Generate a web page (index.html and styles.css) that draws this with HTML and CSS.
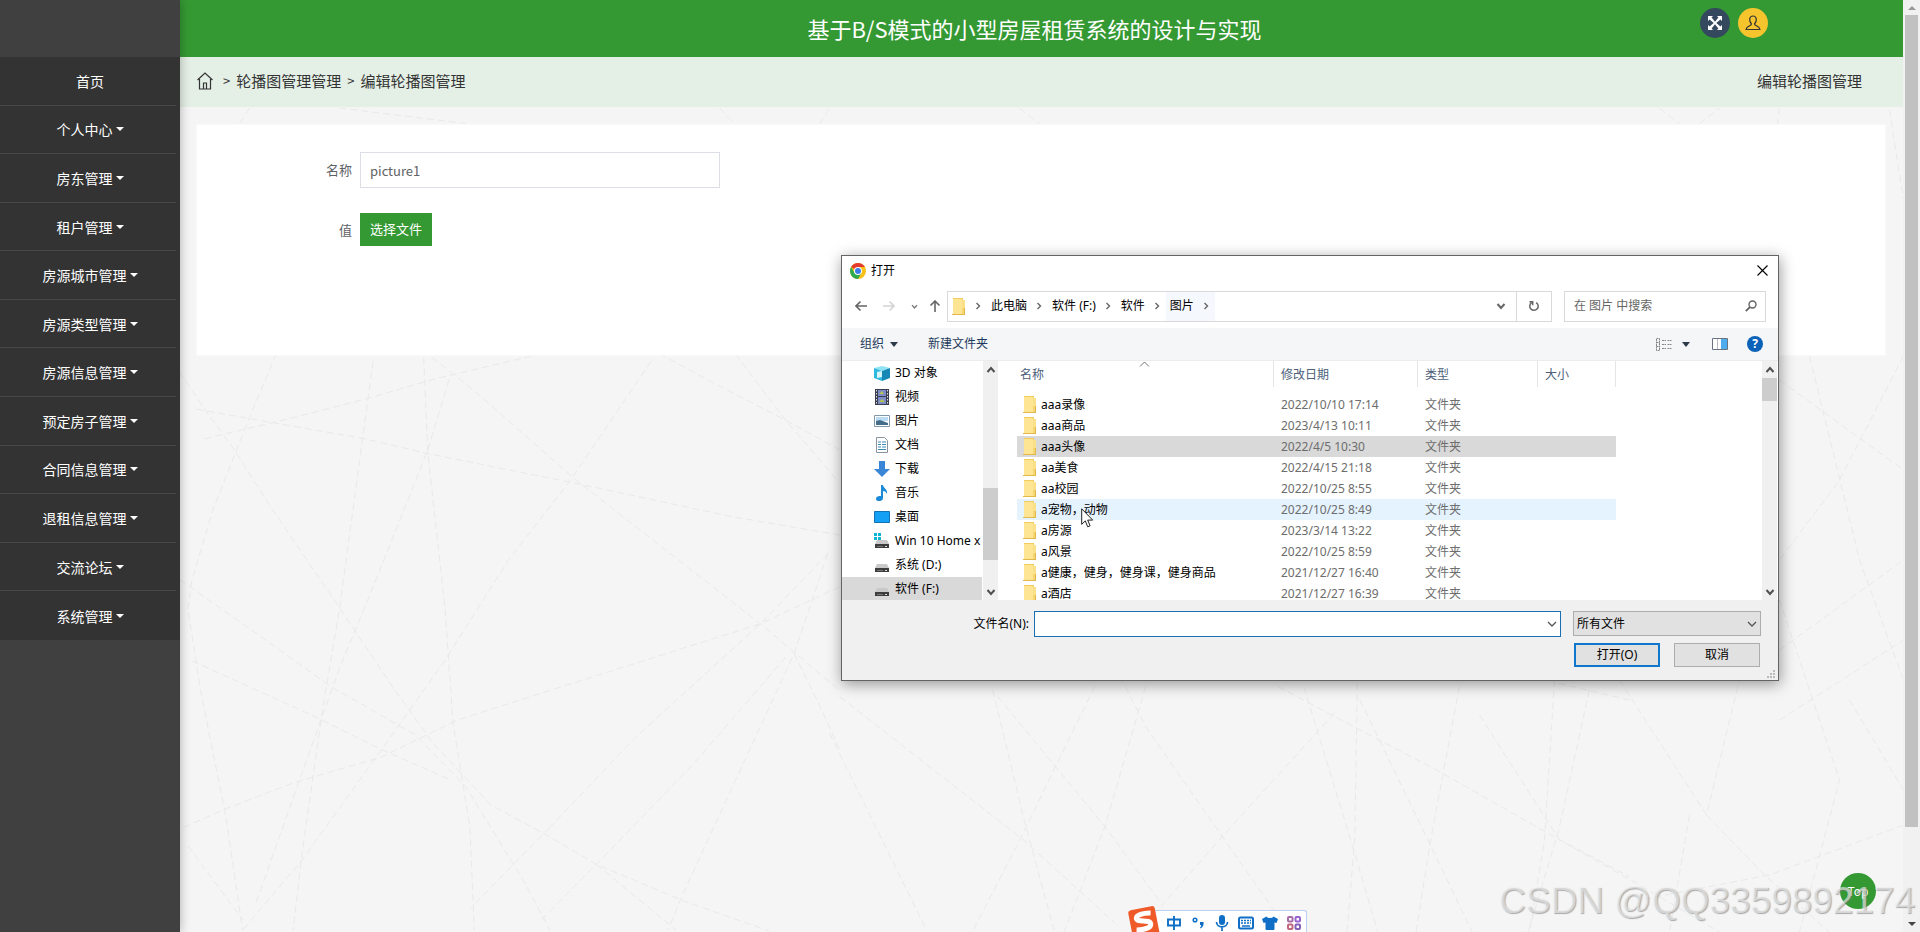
FILE: index.html
```html
<!DOCTYPE html>
<html lang="zh-CN">
<head>
<meta charset="utf-8">
<meta name="viewport" content="width=device-width, initial-scale=1">
<title>基于B/S模式的小型房屋租赁系统的设计与实现</title>
<link rel="stylesheet" href="styles.css">
</head>
<body>
<svg class="defs" aria-hidden="true">
  <symbol id="folder" viewBox="0 0 14 17"><path fill="#f0cd5e" d="M1 0h10v17H1z"/><path fill="#fde593" d="M1 1h9v15H1z"/><path fill="#f5d670" d="M10 9h2.500v8H10z"/><path fill="#fbe08a" d="M10 2h3v8h-3z"/><path fill="#e3b84a" d="M0 16h13v1H0zM12 10h1v6h-1z"/></symbol>
  <symbol id="chev-r" viewBox="0 0 8 8"><path d="M2.500 1l3 3-3 3" fill="none" stroke="#666" stroke-width="1.400"/></symbol>
  <symbol id="chev-d" viewBox="0 0 10 10"><path d="M1 3l4 4 4-4" fill="none" stroke="currentColor" stroke-width="1.300"/></symbol>
  <symbol id="chev-b" viewBox="0 0 10 10"><path d="M1.500 3l3.500 4 3.500-4" fill="none" stroke="currentColor" stroke-width="2"/></symbol>
  <symbol id="drive" viewBox="0 0 16 16"><path fill="#c9c9c9" d="M3 7h10l2 4H1z"/><path fill="#3d3d3d" d="M1 11h14v4H1z"/><path fill="#777" d="M3 13h6v1H3z"/><path fill="#ddd" d="M11 13h2v1h-2z"/></symbol>
</svg>

<nav class="sidebar">
  <div class="menu">
    <a href="#">首页</a>
    <a href="#" class="drop">个人中心</a>
    <a href="#" class="drop">房东管理</a>
    <a href="#" class="drop">租户管理</a>
    <a href="#" class="drop">房源城市管理</a>
    <a href="#" class="drop">房源类型管理</a>
    <a href="#" class="drop">房源信息管理</a>
    <a href="#" class="drop">预定房子管理</a>
    <a href="#" class="drop">合同信息管理</a>
    <a href="#" class="drop">退租信息管理</a>
    <a href="#" class="drop">交流论坛</a>
    <a href="#" class="drop">系统管理</a>
  </div>
</nav>

<div class="page">
  <svg class="mesh" viewBox="180 0 1724 932" preserveAspectRatio="xMidYMid slice" aria-hidden="true">
    <g transform="translate(180 350) scale(.421 .37)">
      <path d="M0 60L60 160 130 270 220 430 370 680 500 900 600 1060 740 1230 870 1310 990 1390 1200 1490 1400 1570M230 10L160 200 80 430 30 620 20 700 50 920 110 1260 150 1568M40 160L440 240 590 280 940 360 1310 450 1568 500M60 240L280 180 450 130 600 80 860 10M460 30L430 280 380 700 340 970 290 1370 270 1568M580 20L590 280 630 690 650 1010 690 1290 700 1568M0 620L200 780 360 910 560 1040 680 1180 820 1440 880 1568M30 840L320 990 480 1080 640 1160M600 20L700 110 940 350 1380 740 1568 920M1120 30L930 350 780 570 630 840 480 1080 290 1380 150 1568M640 80L590 270 460 640 380 860 320 1050 180 1500M10 1290L110 1240 270 1170 480 1100 660 1000 880 920 1380 740 1568 640M1140 10L1270 90 1440 190 1568 270M1320 10L1440 190 1568 360M1540 550L1380 740 1080 1050 880 1290M1540 550L1460 820 1200 1460 1160 1568M1440 830L1220 1120 990 1390 860 1540M1460 820L1520 960 1568 1080M20 1340L150 1540M880 1290L690 1510M990 1390L1180 1568"/>
    </g>
    <g transform="translate(830 670) scale(.51 .333)">
      <path d="M20 80L380 510 560 760M0 190L190 780M320 60L380 440 440 780M330 80L540 470 650 700M520 50L440 300 370 520 280 786M620 50L540 470 460 786M580 50L620 170 770 500 880 740M990 130L770 500 650 710M930 50L1020 500 1075 786M880 50L1040 180 1190 300 1420 500 1568 620M1035 40L1030 500 1015 786M1040 90L1170 500 1260 786M1235 50L1180 500 1150 786M1490 60L1430 480 1370 786M1430 40L1568 90"/>
    </g>
    <path d="M1480 715L1560 840 1640 885 1720 932M1555 680L1545 840 1530 932M1690 815L1670 932M1707 815L1765 875 1830 932M1904 825L1770 875 1640 900M1620 680L1707 815 1740 680M1780 600L1840 780 1800 932M1780 380L1904 470M1904 356L1840 480 1780 560M1810 356L1860 560 1904 680M1780 650L1904 560M1780 720L1904 640M1850 700L1904 790M250 108L240 124M340 108L470 124M720 108L735 124M820 124L830 108M1020 108L1040 124M1660 108L1680 124M1700 124L1720 108M1780 108L1778 124M1890 110L1904 200"/>
  </svg>

  <header class="topbar">
    <h1>基于B/S模式的小型房屋租赁系统的设计与实现</h1>
    <div class="tools">
      <button class="round navy" aria-label="全屏"><svg width="14" height="14" viewBox="0 0 14 14"><path fill="#fff" d="M0 0h5L3.600 1.600 7 5.700l3.400-4.100L9 0h5v5l-1.600-1.400L8.300 7l4.100 3.400L14 9v5H9l1.400-1.600L7 8.300l-3.400 4.100L5 14H0V9l1.600 1.400L5.700 7 1.600 3.600 0 5z"/></svg></button>
      <button class="round gold" aria-label="用户"><svg width="16" height="16" viewBox="0 0 16 16"><path fill="none" stroke="#333" stroke-width="1.200" d="M6.500 9C5 7.500 4.500 6 4.700 4 5 2 6.200 1 8 1s3 1 3.300 3c.2 2-.3 3.500-1.800 5 0 2 4.800 1.500 5.500 5.500H1C1.700 10.500 6.500 11 6.500 9z"/></svg></button>
    </div>
  </header>

  <div class="crumbs">
    <nav>
      <a href="#" aria-label="首页"><svg width="16" height="18" viewBox="0 0 16 18"><path fill="none" stroke="#333" stroke-width="1.200" d="M.5 8L8 1l7.500 7M2.500 7v10h11V7M6.500 17v-6h3v6"/></svg></a>
      <span>&gt;</span><a href="#">轮播图管理管理</a><span>&gt;</span><a href="#">编辑轮播图管理</a>
    </nav>
    <strong>编辑轮播图管理</strong>
  </div>

  <main class="content">
    <form class="card">
      <label for="name">名称</label>
      <input id="name" type="text" value="picture1">
      <label for="pick">值</label>
      <button id="pick" type="button">选择文件</button>
    </form>
  </main>
</div>

<div class="scroll" aria-hidden="true"><i class="up"></i><b></b><i class="down"></i></div>

<section class="dialog" role="dialog" aria-label="打开">
  <div class="dlg-title">
    <svg width="16" height="16" viewBox="0 0 16 16"><circle cx="8" cy="8" r="8" fill="#fbc116"/><path fill="#e33b2e" d="M8 8L1.100 4A8 8 0 0 1 14.900 4H8z"/><path fill="#2da94f" d="M1.100 4A8 8 0 0 0 8 16l3.500-6L8 8 4.600 10z"/><circle cx="8" cy="8" r="4" fill="#fff"/><circle cx="8" cy="8" r="3" fill="#3a7de8"/></svg>
    <span>打开</span>
    <button aria-label="关闭"><svg width="11" height="11" viewBox="0 0 11 11"><path d="M.5.5l10 10M10.500.5l-10 10" stroke="#000" stroke-width="1.100"/></svg></button>
  </div>
  <div class="dlg-nav">
    <div class="arrows">
      <button aria-label="后退"><svg width="12" height="12" viewBox="0 0 12 12"><path d="M12 6H1M5.500 1.500L1 6l4.500 4.500" fill="none" stroke="#666" stroke-width="1.600"/></svg></button>
      <button aria-label="前进"><svg width="12" height="12" viewBox="0 0 12 12"><path d="M0 6h11M6.500 1.500L11 6l-4.500 4.500" fill="none" stroke="#d4d4d4" stroke-width="1.600"/></svg></button>
      <button aria-label="最近"><svg width="7" height="7"><use href="#chev-b"/></svg></button>
      <button aria-label="向上"><svg width="12" height="12" viewBox="0 0 12 12"><path d="M6 12V1M1.500 5.500L6 1l4.500 4.500" fill="none" stroke="#666" stroke-width="1.600"/></svg></button>
    </div>
    <div class="address">
      <svg width="14" height="17"><use href="#folder"/></svg>
      <svg class="sep" width="8" height="8"><use href="#chev-r"/></svg><button>此电脑</button>
      <svg class="sep" width="8" height="8"><use href="#chev-r"/></svg><button>软件 (F:)</button>
      <svg class="sep" width="8" height="8"><use href="#chev-r"/></svg><button>软件</button>
      <svg class="sep" width="8" height="8"><use href="#chev-r"/></svg><button class="here">图片<svg width="8" height="8"><use href="#chev-r"/></svg></button>
      <button class="open" aria-label="展开"><svg width="10" height="10"><use href="#chev-b"/></svg></button>
      <button class="reload" aria-label="刷新"><svg width="12" height="12" viewBox="0 0 12 12"><path d="M8.200 2.600a4.200 4.200 0 1 1-4.600.1M1.500 1.800h3.200v3.400" fill="none" stroke="#666" stroke-width="1.500"/></svg></button>
    </div>
    <label class="search"><input type="text" placeholder="在 图片 中搜索" aria-label="在 图片 中搜索"><svg width="12" height="12" viewBox="0 0 12 12"><circle cx="7.500" cy="4.500" r="3.500" fill="none" stroke="#666" stroke-width="1.400"/><path d="M5 7L.8 11.200" stroke="#666" stroke-width="1.800"/></svg></label>
  </div>
  <div class="dlg-tools">
    <button class="arr">组织</button>
    <button>新建文件夹</button>
    <span class="gap"></span>
    <button class="arr view" aria-label="视图"><svg width="16" height="13" viewBox="0 0 16 13"><path d="M.5.5h3v12h-3zM.5 4.500h3M.5 8.500h3M6 2.500h4M11.500 2.500h4M6 6.500h4M11.500 6.500h4M6 10.500h4M11.500 10.500h4" fill="none" stroke="#888" stroke-dasharray="2 .5"/></svg></button>
    <button aria-label="预览"><svg width="16" height="12" viewBox="0 0 16 12"><path d="M.5.5h15v11H.5z" fill="#fff" stroke="#6a7480"/><path d="M5.500 1v10" stroke="#b5bcc4"/><path fill="#50abee" d="M9 1h6v10H9z"/></svg></button>
    <button class="help" aria-label="帮助">?</button>
  </div>
  <div class="dlg-body">
    <ul class="tree">
      <li><svg width="16" height="16" viewBox="0 0 16 16"><path fill="#8fe3f5" d="M0 3l8-2 8 2-8 3z"/><path fill="#2fb9df" d="M0 3l8 3v10l-8-3z"/><path fill="#1588b5" d="M8 6l8-3v10l-8 3z"/><path fill="#d9f6fc" d="M3 7l5-1v6l-5 1z"/></svg>3D 对象</li>
      <li><svg width="16" height="16" viewBox="0 0 16 16"><path fill="#3a3d4d" d="M1 0h14v16H1z"/><path fill="#7d8bc9" d="M4 1h8v6H4zM4 8h8v7H4z"/><path fill="#b6c24e" d="M5 5l3-3 2 3zM5 13l3-3 3 3z"/><path d="M2.500 1v15M13.500 1v15" stroke="#ddd" stroke-dasharray="1.500 1.500"/></svg>视频</li>
      <li><svg width="16" height="16" viewBox="0 0 16 16"><path fill="#fff" stroke="#8296a8" d="M.5 2.500h15v11H.5z"/><path fill="#b9dcf2" d="M2 4h12v4H2z"/><path fill="#456d8a" d="M2 8l4-1 8 3v2H2z"/></svg>图片</li>
      <li><svg width="16" height="16" viewBox="0 0 16 16"><path fill="#fff" stroke="#8a949e" d="M2.500.5h8l3 3v12h-11z"/><path d="M4 5h3M8 5h4M4 7.500h3M8 7.500h4M4 10h3M8 10h4M4 12.500h8" stroke="#3b89b5"/></svg>文档</li>
      <li><svg width="16" height="16" viewBox="0 0 16 16"><path fill="#3a86d6" d="M5 0h6v8h5l-8 8-8-8h5z"/></svg>下载</li>
      <li><svg width="16" height="16" viewBox="0 0 16 16"><path fill="#1c8ad6" d="M7 0h2c0 3 5 4 4 9-1-2-2-3-4-3v7c0 4-7 4-7 1s3-3 5-3z"/></svg>音乐</li>
      <li><svg width="16" height="16" viewBox="0 0 16 16"><path fill="#14a0f5" stroke="#1272b5" d="M.5 2.500h15v11H.5z"/></svg>桌面</li>
      <li><svg width="16" height="16" viewBox="0 0 16 16"><use href="#drive" width="16" height="16"/><path fill="#10b5d6" d="M0 0h3v3H0zM4 0h3v3H4zM0 4h3v3H0zM4 4h3v3H4z"/></svg>Win 10 Home x</li>
      <li><svg width="16" height="16"><use href="#drive"/></svg>系统 (D:)</li>
      <li class="on"><svg width="16" height="16"><use href="#drive"/></svg>软件 (F:)</li>
    </ul>
    <div class="bar tree-bar" aria-hidden="true"><svg class="flip" width="10" height="10"><use href="#chev-b"/></svg><b></b><svg width="10" height="10"><use href="#chev-b"/></svg></div>
    <div class="files">
      <svg class="sort" width="11" height="6" viewBox="0 0 11 6"><path d="M1 5.500L5.500 1 10 5.500" fill="none" stroke="#777"/></svg>
      <table>
        <colgroup><col class="c-name"><col class="c-date"><col class="c-type"><col class="c-size"></colgroup>
        <thead><tr><th><span>名称</span></th><th><span>修改日期</span></th><th><span>类型</span></th><th><span>大小</span></th></tr></thead>
        <tbody>
          <tr><td><svg width="14" height="17"><use href="#folder"/></svg>aaa录像</td><td>2022/10/10 17:14</td><td>文件夹</td><td></td></tr>
          <tr><td><svg width="14" height="17"><use href="#folder"/></svg>aaa商品</td><td>2023/4/13 10:11</td><td>文件夹</td><td></td></tr>
          <tr class="sel"><td><svg width="14" height="17"><use href="#folder"/></svg>aaa头像</td><td>2022/4/5 10:30</td><td>文件夹</td><td></td></tr>
          <tr><td><svg width="14" height="17"><use href="#folder"/></svg>aa美食</td><td>2022/4/15 21:18</td><td>文件夹</td><td></td></tr>
          <tr><td><svg width="14" height="17"><use href="#folder"/></svg>aa校园</td><td>2022/10/25 8:55</td><td>文件夹</td><td></td></tr>
          <tr class="hov"><td><svg width="14" height="17"><use href="#folder"/></svg>a宠物，动物</td><td>2022/10/25 8:49</td><td>文件夹</td><td></td></tr>
          <tr><td><svg width="14" height="17"><use href="#folder"/></svg>a房源</td><td>2023/3/14 13:22</td><td>文件夹</td><td></td></tr>
          <tr><td><svg width="14" height="17"><use href="#folder"/></svg>a风景</td><td>2022/10/25 8:59</td><td>文件夹</td><td></td></tr>
          <tr><td><svg width="14" height="17"><use href="#folder"/></svg>a健康，健身，健身课，健身商品</td><td>2021/12/27 16:40</td><td>文件夹</td><td></td></tr>
          <tr><td><svg width="14" height="17"><use href="#folder"/></svg>a酒店</td><td>2021/12/27 16:39</td><td>文件夹</td><td></td></tr>
        </tbody>
      </table>
    </div>
    <div class="bar file-bar" aria-hidden="true"><svg class="flip" width="10" height="10"><use href="#chev-b"/></svg><b></b><svg width="10" height="10"><use href="#chev-b"/></svg></div>
  </div>
  <div class="dlg-foot">
    <label for="fname">文件名(N):</label>
    <div class="combo"><input id="fname" type="text"><svg width="10" height="10"><use href="#chev-d"/></svg></div>
    <div class="side">
      <div class="pick"><select aria-label="文件类型"><option>所有文件</option></select><svg width="10" height="10"><use href="#chev-d"/></svg></div>
      <div class="acts"><button class="main">打开(O)</button><button>取消</button></div>
    </div>
  </div>
  <svg class="grip" width="9" height="9" viewBox="0 0 9 9" aria-hidden="true"><path fill="#bbb" d="M6 0h2v2H6zM3 3h2v2H3zM6 3h2v2H6zM0 6h2v2H0zM3 6h2v2H3zM6 6h2v2H6z"/></svg>
</section>

<svg class="cursor" width="13" height="20" viewBox="0 0 13 20" aria-hidden="true"><path fill="#fff" stroke="#222" d="M.7.8v15.500l3.600-3.400 2.400 5.900 2.400-1-2.400-5.700h5z"/></svg>

<div class="ime">
  <svg class="logo" width="33" height="30" viewBox="0 0 33 30" aria-hidden="true"><g transform="rotate(-11 16 16)"><rect x="3" y="3" width="27" height="30" rx="3" fill="#ee5a2a"/><path d="M25 9.500C18 8 10 8.500 10 12.500s13 3 13 7.500-8 5-15 3.500" fill="none" stroke="#fff" stroke-width="5"/></g></svg>
  <button aria-label="中文"><svg width="16" height="16" viewBox="0 0 16 16"><path d="M2 4.500h12v6H2zM8 1v14" fill="none" stroke="#0f6fc6" stroke-width="1.900"/></svg></button>
  <button aria-label="标点"><svg width="16" height="16" viewBox="0 0 16 16"><circle cx="5" cy="5" r="1.800" fill="none" stroke="#0f6fc6" stroke-width="1.500"/><path fill="#0f6fc6" d="M10 7h3.500c.5 3-.5 5-3 6.500l-.5-1c1-.7 1.300-1.500 1-2.500h-1z"/></svg></button>
  <button aria-label="语音"><svg width="16" height="16" viewBox="0 0 16 16"><rect x="5" y="0" width="6" height="10" rx="3" fill="#0f6fc6"/><path d="M2.500 7c0 6.500 11 6.500 11 0M8 12v4" fill="none" stroke="#0f6fc6" stroke-width="1.700"/></svg></button>
  <button aria-label="键盘"><svg width="16" height="16" viewBox="0 0 16 16"><rect x="1" y="2.500" width="14" height="11" rx="1.500" fill="#fff" stroke="#0f6fc6" stroke-width="2"/><path d="M3 5.500h10M3 8h10" stroke="#0f6fc6" stroke-width="1.600" stroke-dasharray="2 1"/><path d="M4 11h8" stroke="#0f6fc6" stroke-width="1.500"/></svg></button>
  <button aria-label="皮肤"><svg width="16" height="16" viewBox="0 0 16 16"><path fill="#0f6fc6" d="M4.500 1.500c1.500 2 5.500 2 7 0L16 4l-1.500 4-2-.5V14q0 1-1 1h-7q-1 0-1-1V7.500l-2 .5L0 4z"/></svg></button>
  <button aria-label="工具"><svg width="16" height="16" viewBox="0 0 16 16" fill="none" stroke-width="2"><rect x="2" y="2" width="4.500" height="4.500" rx="1" stroke="#a56ca6"/><rect x="9.500" y="2" width="4.500" height="4.500" rx="1" stroke="#9564d0"/><rect x="2" y="9.500" width="4.500" height="4.500" rx="1" stroke="#c1667c"/><rect x="9.500" y="9.500" width="4.500" height="4.500" rx="1" stroke="#8660b8"/></svg></button>
</div>

<a class="to-top" href="#">Top</a>
<div class="mark">CSDN @QQ3359892174</div>
</body>
</html>
```
FILE: styles.css
```css
* { box-sizing: border-box; }
body {
  margin: 0;
  min-height: 100vh;
  display: flex;
  position: relative;
  overflow: hidden;
  background: #f5f5f5;
  font: 13px/20px "Noto Sans CJK SC", "Open Sans", sans-serif;
  color: #333;
}
button, input, select { font: inherit; color: inherit; }
button { border: 0; padding: 0; background: none; }
a { color: inherit; text-decoration: none; }
svg { display: block; flex: none; }
.defs { position: absolute; width: 0; height: 0; }

/* sidebar */
.sidebar { width: 180px; flex: none; background: #404040; padding-top: 57px; z-index: 1; box-shadow: 0 0 10px rgba(0, 0, 0, .3); }
.menu { display: grid; grid-auto-rows: 1fr; min-height: 583px; background: #333; padding-right: 4px; }
.menu a { display: flex; align-items: center; justify-content: center; gap: 3px; padding-left: 4px; color: #fff; font-size: 14px; border-bottom: 1px solid #484848; }
.menu a:last-child { border-bottom: 0; }
.menu .drop::after { content: ""; border: 4px solid transparent; border-top-color: #fff; border-bottom: 0; }

/* page */
.page { flex: 1; min-width: 0; position: relative; }
.mesh { position: absolute; inset: 0; width: 100%; height: 100%; }
.mesh path { fill: none; stroke: #e9e9e9; stroke-width: 1; stroke-dasharray: 7 4; vector-effect: non-scaling-stroke; }
.topbar { position: relative; height: 57px; display: grid; grid-template-columns: 1fr auto 1fr; background: #359933; padding-right: 14px; }
.topbar h1 { grid-column: 2; margin: 0; padding-top: 12px; font-size: 22px; line-height: 32px; font-weight: 400; color: #fff; }
.tools { display: flex; gap: 8px; padding: 8px 121px 0 0; justify-content: flex-end; }
.round { width: 30px; height: 30px; border-radius: 50%; display: grid; place-items: center; }
.navy { background: #34495e; }
.gold { background: #f6c52e; }
.crumbs { position: relative; height: 50px; display: flex; align-items: center; justify-content: space-between; padding: 0 41px 2px 17px; background: #e4efe6; font-size: 15px; }
.crumbs nav { display: flex; align-items: center; gap: 6px; }
.crumbs nav svg { margin-right: 4px; }
.crumbs span { font-size: 13px; }
.crumbs strong { font-weight: 400; }
.content { position: relative; padding: 18px 18px 18px 17px; }
.card { display: grid; grid-template-columns: 155px 360px; column-gap: 8px; row-gap: 25px; align-content: start; align-items: center; min-height: 230px; padding-top: 27px; background: #fff; box-shadow: 0 0 3px #fff; color: #606266; }
.card label { text-align: right; }
.card input { height: 36px; border: 1px solid #dcdfe6; padding: 0 9px; background: #fff; outline: 0; }
.card button { width: 72px; height: 33px; padding-bottom: 2px; background: #359933; color: #fff; }

/* page scrollbar */
.scroll { width: 17px; flex: none; display: flex; flex-direction: column; align-items: center; justify-content: space-between; padding: 6px 0; background: #f1f1f1; }
.scroll b { width: 13px; flex: 1; margin: 5px 0 95px; background: #c1c1c1; }
.scroll i { border: 4px solid transparent; }
.scroll .up { border-bottom-color: #999; border-top: 0; }
.scroll .down { border-top-color: #444; border-bottom: 0; }

/* file dialog */
.dialog { position: absolute; z-index: 2; left: 841px; top: 255px; width: 938px; border: 1px solid #646464; background: #fff; box-shadow: 1px 3px 14px rgba(0, 0, 0, .4); font: 12px/16px "Noto Sans", "Noto Sans CJK SC", sans-serif; color: #000; }
.dlg-title { height: 29px; display: flex; align-items: center; gap: 5px; padding: 0 10px 0 8px; }
.dlg-title button { margin-left: auto; }
.dlg-nav { display: flex; align-items: center; height: 43px; padding: 0 12px 1px 13px; }
.arrows { width: 92px; display: flex; align-items: center; gap: 16px; color: #777; }
.arrows button:last-child { margin-left: -5px; }
.address { flex: 1; display: flex; align-items: center; height: 31px; border: 1px solid #d9d9d9; padding-left: 4px; }
.address .sep { margin: 0 9px 0 8px; }
.address .here { display: flex; align-items: center; gap: 8px; height: 29px; padding: 0 5px 0 4px; margin-left: -4px; background: #f5f9fd; }
.address .open { margin-left: auto; padding-right: 10px; color: #666; }
.reload { width: 35px; height: 29px; border-left: 1px solid #d9d9d9; display: grid; place-items: center; }
.search { width: 202px; height: 31px; margin-left: 12px; display: flex; align-items: center; border: 1px solid #d9d9d9; padding: 0 8px 0 9px; }
.search input { flex: 1; min-width: 0; border: 0; padding: 0; outline: 0; background: none; }
.search input::placeholder { color: #666; opacity: 1; }
.dlg-tools { display: flex; align-items: center; height: 33px; padding: 0 15px 0 18px; background: #f4f6f7; border-bottom: 1px solid #ececec; gap: 22px; color: #1e395b; }
.gap { flex: 1; }
.arr { display: flex; align-items: center; gap: 6px; margin-right: 8px; }
.arr::after { content: ""; border: 4px solid transparent; border-top: 5px solid #2c3a4c; border-bottom: 0; }
.view { gap: 10px; margin-right: 0; }
.help { width: 16px; height: 16px; border-radius: 50%; background: #0b62b8; color: #fff; font-weight: 700; line-height: 16px; margin-left: -3px; }
.dlg-body { display: flex; height: 239px; overflow: hidden; }
.tree { list-style: none; margin: 0; padding: 0; width: 140px; overflow: hidden; }
.tree li { display: flex; align-items: center; gap: 5px; height: 24px; padding-left: 32px; white-space: nowrap; }
.tree .on { background: #d9d9d9; }
.bar { width: 15px; margin-left: 1px; display: flex; flex-direction: column; align-items: center; padding: 4px 0 3px; background: #f0f0f0; color: #505050; }
.bar b { width: 15px; background: #cdcdcd; }
.bar .flip { transform: rotate(180deg); }
.tree-bar { justify-content: space-between; }
.tree-bar b { height: 72px; margin-top: 86px; }
.file-bar { margin-right: 1px; }
.file-bar b { height: 23px; margin: 3px 0 auto; }
.files { flex: 1; position: relative; padding-left: 19px; overflow: hidden; }
.sort { position: absolute; left: 141px; top: 0; }
.files table { border-collapse: collapse; table-layout: fixed; width: 599px; }
.c-name { width: 257px; }
.c-date { width: 144px; }
.c-type { width: 120px; }
.files th { height: 33px; padding: 0; text-align: left; vertical-align: top; font-weight: 400; color: #4c607a; }
.files th span { display: block; height: 26px; padding: 6px 0 0 7px; border-right: 1px solid #e5e5e5; }
.files th:first-child span { padding-left: 3px; }
.files td { height: 21px; padding: 0 0 0 7px; line-height: 20px; color: #6d6d6d; white-space: nowrap; }
.files td:first-child { display: flex; align-items: center; gap: 4px; padding-left: 6px; color: #000; }
.sel { background: #d9d9d9; }
.hov { background: #e5f3ff; }
.dlg-foot { display: grid; grid-template-columns: 187px 1fr 188px; align-items: start; background: #f0f0f0; padding: 11px 17px 13px 0; min-height: 80px; }
.dlg-foot label { text-align: right; line-height: 26px; }
.combo, .pick { display: grid; align-items: center; }
.combo { margin: 0 12px 0 5px; }
.combo > *, .pick > * { grid-area: 1 / 1; }
.combo svg, .pick svg { justify-self: end; margin-right: 4px; color: #555; pointer-events: none; }
.combo input { width: 100%; height: 26px; border: 1px solid #1a6fb0; background: #fff; outline: 0; padding: 0 4px; }
.pick select { appearance: none; width: 100%; height: 25px; border: 1px solid #adadad; border-radius: 0; background: #e1e1e1; padding: 0 3px; outline: 0; }
.acts { display: flex; justify-content: space-between; padding: 7px 1px 0; }
.acts button { width: 86px; height: 24px; background: #e1e1e1; border: 1px solid #adadad; }
.acts .main { border: 2px solid #0f78cd; }
.grip { position: absolute; right: 2px; bottom: 1px; }
.cursor { position: absolute; z-index: 3; left: 1081px; top: 508px; }

/* input method bar */
.ime { position: absolute; z-index: 2; left: 1144px; bottom: 0; height: 22px; display: flex; align-items: center; gap: 8px; padding: 3px 4px 0 21px; background: #fff; border: 1px solid #b9d0ee; border-bottom: 0; border-radius: 3px 3px 0 0; }
.ime .logo { position: absolute; left: -18px; top: -6px; }

.to-top { position: absolute; right: 44px; bottom: 23px; width: 36px; height: 36px; border-radius: 50%; background: #359933; color: #fff; text-align: center; line-height: 36px; font-size: 12px; z-index: 1; }
.mark { position: absolute; z-index: 3; right: 5px; bottom: 10px; font: 37px/42px "Liberation Sans", Arial, sans-serif; color: rgba(242, 242, 242, .6); text-shadow: 1px 1px 1px rgba(120, 120, 120, .6); pointer-events: none; }
```
